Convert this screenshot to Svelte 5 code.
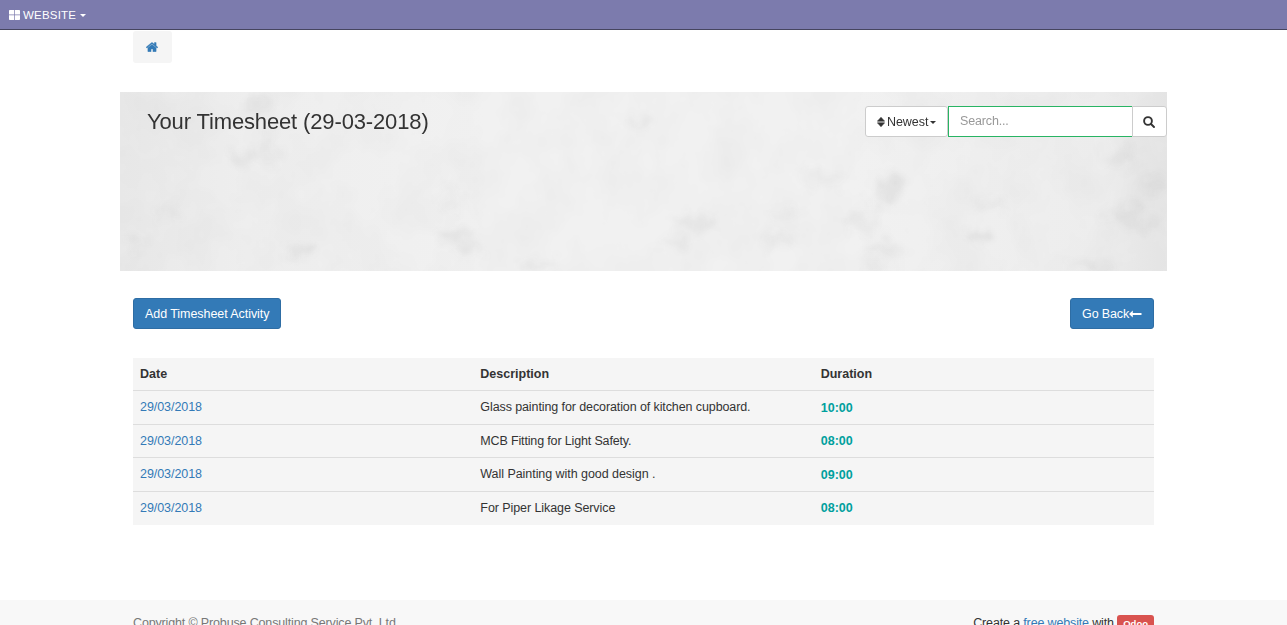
<script>
  const rows = [
    ['29/03/2018', 'Glass painting for decoration of kitchen cupboard.', '10:00', -0.1],
    ['29/03/2018', 'MCB Fitting for Light Safety.', '08:00', -0.15],
    ['29/03/2018', 'Wall Painting with good design .', '09:00', -0.05],
    ['29/03/2018', 'For Piper Likage Service', '08:00', -0.08]
  ];
  // Marks on the plaster banner: x, y, rx, ry, opacity
  const marks = [
    [136, 12, 14, 9, 0.05], [120, 66, 12, 8, 0.06], [148, 58, 10, 16, 0.03],
    [179, 159, 14, 4, 0.1], [16, 149, 7, 5, 0.08], [48, 120, 9, 8, 0.04],
    [334, 143, 13, 5, 0.1], [347, 157, 12, 4, 0.09], [330, 110, 8, 14, 0.03],
    [414, 175, 18, 4, 0.08], [523, 28, 8, 6, 0.08], [571, 131, 22, 6, 0.07],
    [557, 149, 13, 4, 0.07], [657, 147, 20, 5, 0.06], [666, 122, 14, 5, 0.04],
    [704, 86, 24, 4, 0.06], [738, 132, 22, 5, 0.06], [773, 92, 9, 9, 0.08],
    [762, 106, 10, 7, 0.08], [765, 155, 17, 5, 0.07], [758, 176, 12, 5, 0.07],
    [861, 143, 12, 6, 0.1], [870, 114, 18, 4, 0.06], [1000, 66, 16, 8, 0.05],
    [1003, 122, 18, 9, 0.06], [1028, 134, 14, 3, 0.08], [1035, 92, 12, 6, 0.06],
    [972, 174, 24, 5, 0.06]
  ];
</script>

<header class="topbar">
  <svg class="grid" viewBox="0 0 11 10"><path d="M0 .8Q0 0 .8 0H5.200V4.600H0ZM5.900 0H10.200Q11 0 11 .8V4.600H5.900ZM0 5.300H5.200V10H.8Q0 10 0 9.200ZM5.900 5.300H11V9.200Q11 10 10.200 10H5.900Z" /></svg>
  <span class="brand">WEBSITE</span><i class="caret"></i>
</header>

<main>
  <nav class="crumb">
    <svg viewBox="0 0 1664 1300"><path d="M1408 768v480q0 26-19 45t-45 19H960V928H704v384H320q-26 0-45-19t-19-45V768q0-1 .5-3t.5-3l575-474 575 474q1 2 1 6zm223-69-62 74q-8 9-21 11h-3q-13 0-21-7L832 200 140 777q-12 8-24 7-13-2-21-11l-62-74q-8-10-7-23.500T37 654L756 55q32-26 76-26t76 26l244 204V64q0-14 9-23t23-9h192q14 0 23 9t9 23v408l219 182q10 8 11 21.500t-7 23.500z" /></svg>
  </nav>

  <section class="banner">
    <svg class="plaster" viewBox="0 0 1047 179" preserveAspectRatio="none" aria-hidden="true">
      <defs>
        <linearGradient id="tone">
          <stop offset="0" stop-color="#e9e9e9" /><stop offset=".12" stop-color="#eeeeee" />
          <stop offset=".35" stop-color="#f1f1f1" /><stop offset=".7" stop-color="#f1f1f1" />
          <stop offset=".94" stop-color="#ededed" /><stop offset="1" stop-color="#e6e6e6" />
        </linearGradient>
        <filter id="grain" x="0" y="0" width="100%" height="100%" color-interpolation-filters="sRGB">
          <feTurbulence type="fractalNoise" baseFrequency=".022 .018" numOctaves="4" seed="8" />
          <feColorMatrix values="0 0 0 0 .6  0 0 0 0 .6  0 0 0 0 .6  .12 0 0 0 -.04" />
        </filter>
        <filter id="smudge" x="0" y="0" width="100%" height="100%" filterUnits="userSpaceOnUse" color-interpolation-filters="sRGB">
          <feGaussianBlur in="SourceGraphic" stdDeviation="4" result="soft" />
          <feTurbulence type="fractalNoise" baseFrequency=".07" numOctaves="2" seed="4" result="n" />
          <feDisplacementMap in="soft" in2="n" scale="28" xChannelSelector="R" yChannelSelector="G" />
          <feGaussianBlur stdDeviation="2" />
        </filter>
      </defs>
      <rect width="1047" height="179" fill="url(#tone)" />
      <rect width="1047" height="179" filter="url(#grain)" />
      <g filter="url(#smudge)">
        {#each marks as [x, y, rx, ry, o]}
          <ellipse cx={x} cy={y} {rx} {ry} fill="#444" opacity={o} />
        {/each}
      </g>
    </svg>
    <h1>Your Timesheet (29-03-2018)</h1>
    <div class="tools">
      <button class="sort">
        <svg viewBox="0 0 8 10"><path d="M4 .3 7.600 4.200H.4ZM.4 5.800H7.600L4 9.700Z" stroke="#333" stroke-width=".6" stroke-linejoin="round" /></svg>
        <span>Newest</span><i class="caret"></i>
      </button>
      <input placeholder="Search..." aria-label="Search" />
      <button class="find" aria-label="Find">
        <svg viewBox="0 0 12 12"><circle cx="5" cy="5" r="3.900" /><path d="m8 8 3 3" /></svg>
      </button>
    </div>
  </section>

  <div class="actions">
    <button class="primary"><span>Add Timesheet Activity</span></button>
    <button class="primary back"><span>Go Back</span><svg viewBox="0 0 13 8"><path d="M0 4 3.800 .4V3H12.500V5H3.800V7.600Z" /></svg></button>
  </div>

  <table>
    <thead><tr><th>Date</th><th>Description</th><th>Duration</th></tr></thead>
    <tbody>
      {#each rows as [date, text, time, track]}
        <tr><td><a href="#top">{date}</a></td><td style:letter-spacing="{track}px">{text}</td><td class="time">{time}</td></tr>
      {/each}
    </tbody>
  </table>
</main>

<footer>
  <div class="foot">
    <span class="copy">Copyright © Probuse Consulting Service Pvt. Ltd.</span>
    <span class="made">Create a <a href="#top">free website</a> with <b>Odoo</b></span>
  </div>
</footer>

<style>
  :global(body) { margin: 0; background: #fff; }
  :global(#app) { height: 625px; overflow: hidden; display: flex; flex-direction: column; font: 12.500px/18px "Liberation Sans", Arial, sans-serif; letter-spacing: -.06px; color: #333; }
  .topbar { box-sizing: border-box; height: 30px; flex: none; background: #7c7bad; border-bottom: 1px solid #46455f; display: flex; align-items: center; padding-left: 9px; color: #fff; font-size: 11.500px; letter-spacing: .2px; }
  .grid { width: 11px; height: 10px; fill: #fff; margin-right: 3px; }
  .caret { border: 3px solid transparent; border-top-color: currentColor; border-bottom: 0; }
  .topbar .caret { margin: 2px 0 0 4px; }
  main { display: flow-root; width: 1047px; margin-left: 120px; flex: none; height: 570px; }
  .crumb { box-sizing: border-box; width: 39px; height: 32px; margin: 1px 0 0 13px; padding: 0 1px 1px 0; background: #f5f5f5; border-radius: 3px; display: flex; align-items: center; justify-content: center; }
  .crumb svg { width: 12px; height: 10px; fill: #337ab7; stroke: #337ab7; stroke-width: 50; }
  .banner { margin-top: 29px; height: 179px; display: flex; justify-content: space-between; position: relative; isolation: isolate; }
  .plaster { position: absolute; inset: 0; width: 100%; height: 100%; z-index: -1; }
  h1 { margin: 15px 0 0 27px; font-size: 22px; line-height: 30px; font-weight: 400; white-space: nowrap; letter-spacing: -.14px; }
  .tools { display: flex; height: 31px; margin-top: 14px; }
  button, input { box-sizing: border-box; font: inherit; letter-spacing: -.06px; color: #333; background: #fff; border: 1px solid #ccc; padding: 0; margin: 0; }
  .sort { width: 83px; border-radius: 3px; display: flex; align-items: center; padding-left: 11px; }
  .sort svg { width: 8px; height: 10px; fill: #333; margin-right: 2px; }
  .sort .caret { margin: 1px 0 0 2px; border-width: 3px 3px 0; }
  input { width: 184px; border-color: #28b463; border-right: 0; padding: 0 11px 2px; outline: 0; }
  input::placeholder { color: #999; opacity: 1; letter-spacing: -.15px; }
  .find { width: 35px; border-radius: 0 3px 3px 0; display: flex; align-items: center; justify-content: center; padding-right: 1px; }
  .find svg { width: 12px; height: 12px; fill: none; stroke: #333; stroke-width: 1.900; stroke-linecap: round; }
  .actions { display: flex; justify-content: space-between; margin: 27px 13px 0; height: 31px; }
  .primary { display: flex; align-items: center; padding: 0 11px; background: #337ab7; border-color: #2e6da4; border-radius: 3px; color: #fff; }
  .back { letter-spacing: -.15px; }
  .primary svg { width: 13px; height: 8px; fill: #fff; }
  table { width: 1021px; margin: 29px 13px 0; border-collapse: separate; border-spacing: 0; table-layout: fixed; background: #f5f5f5; }
  th, td { box-sizing: border-box; height: 34px; padding: 0 7px; text-align: left; border-top: 1px solid #ddd; white-space: nowrap; }
  tbody tr:nth-child(2) td { height: 33px; }
  tbody tr:nth-child(odd) td:not(.time), tbody tr:last-child td { padding-bottom: 2px; }
  tbody tr:first-child .time { padding-top: 1px; }
  th { border-top: 0; height: 32px; letter-spacing: 0; }
  .time { color: #00a09d; font-weight: 700; letter-spacing: .05px; }
  a { color: #337ab7; text-decoration: none; }
  footer { height: 25px; background: #f8f8f8; overflow: hidden; }
  .foot { width: 1021px; margin-left: 133px; padding-top: 14px; display: flex; justify-content: space-between; white-space: nowrap; letter-spacing: -.15px; }
  .copy { color: #777; }
  b { display: inline-block; background: #d9534f; color: #fff; font-size: 9.500px; letter-spacing: 0; line-height: 18px; height: 16px; padding: 0 6px; border-radius: 3px; vertical-align: top; margin-top: 1px; }
</style>
